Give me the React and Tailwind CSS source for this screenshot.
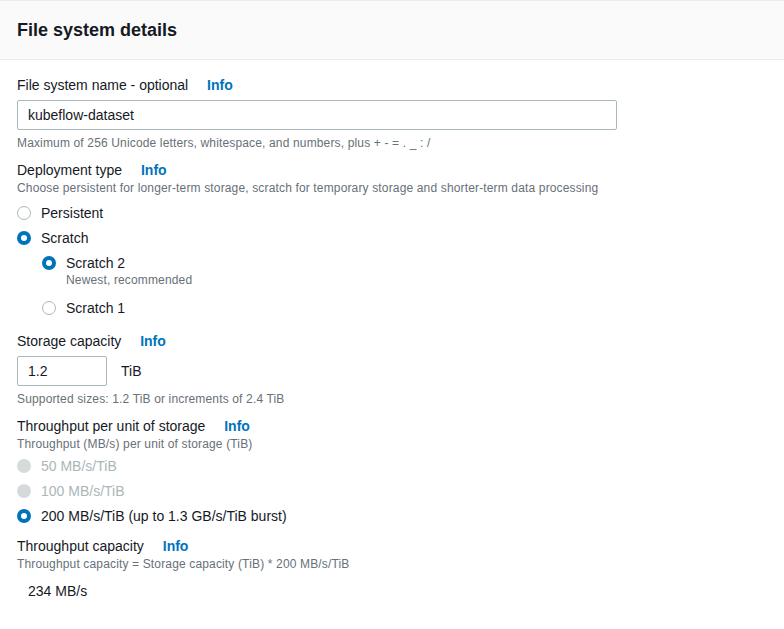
import React from "react";

const Info = () => (
  <span className="ml-[15px] font-bold text-[#0073bb]">Info</span>
);

const Radio = ({ state }) => {
  if (state === "checked")
    return (
      <span className="flex h-[14px] w-[14px] shrink-0 items-center justify-center rounded-full bg-[#0073bb]">
        <span className="h-[6px] w-[6px] rounded-full bg-white" />
      </span>
    );
  if (state === "disabled")
    return <span className="h-[14px] w-[14px] shrink-0 rounded-full bg-[#d5dbdb]" />;
  return (
    <span className="h-[14px] w-[14px] shrink-0 rounded-full border-[1.5px] border-[#aab7b8] bg-white" />
  );
};

const Option = ({ state, label, sub, className = "" }) => (
  <div className={className}>
    <div className="flex h-[20px] items-center gap-[10px]">
      <Radio state={state} />
      <span className={state === "disabled" ? "text-[#aab7b8]" : "text-[#16191f]"}>{label}</span>
    </div>
    {sub && (
      <div className="ml-[24px] text-[12px] leading-[14px] tracking-[0.15px] text-[#687078]">{sub}</div>
    )}
  </div>
);

export default function App() {
  return (
    <div
      className="min-h-screen bg-white text-[14px] text-[#16191f]"
      style={{ fontFamily: '"Liberation Sans", Arial, sans-serif' }}
    >
      {/* Header */}
      <div className="flex h-[60px] items-center border-y border-[#eaeded] bg-[#fafafa] px-[17px]">
        <h2 className="text-[18px] font-bold">File system details</h2>
      </div>

      <div className="px-[17px] pt-[15px] pb-8">
        {/* Name */}
        <div className="h-[20px] leading-[20px]">
          File system name - optional <Info />
        </div>
        <div className="mt-[5px] flex h-[30px] w-[600px] items-center rounded-[2px] border border-[#aab7b8] px-[10px]">
          kubeflow-dataset
        </div>
        <div className="mt-[5px] text-[12px] leading-[16px] tracking-[0.15px] text-[#687078]">
          Maximum of 256 Unicode letters, whitespace, and numbers, plus + - = . _ : /
        </div>

        {/* Deployment type */}
        <div className="mt-[9px] h-[20px] leading-[20px]">
          Deployment type <Info />
        </div>
        <div className="mt-[1px] text-[12px] leading-[14px] tracking-[0.15px] text-[#687078]">
          Choose persistent for longer-term storage, scratch for temporary storage and shorter-term data processing
        </div>
        <div className="mt-[8px] flex flex-col gap-[5px]">
          <Option state="unchecked" label="Persistent" />
          <Option state="checked" label="Scratch" />
          <div className="ml-[25px] flex flex-col gap-[11px]">
            <Option state="checked" label="Scratch 2" sub="Newest, recommended" />
            <Option state="unchecked" label="Scratch 1" />
          </div>
        </div>

        {/* Storage capacity */}
        <div className="mt-[13px] h-[20px] leading-[20px]">
          Storage capacity <Info />
        </div>
        <div className="mt-[5px] flex items-center gap-[14px]">
          <div className="flex h-[30px] w-[90px] items-center rounded-[2px] border border-[#aab7b8] px-[10px]">
            1.2
          </div>
          <span>TiB</span>
        </div>
        <div className="mt-[5px] text-[12px] leading-[16px] tracking-[0.15px] text-[#687078]">
          Supported sizes: 1.2 TiB or increments of 2.4 TiB
        </div>

        {/* Throughput per unit */}
        <div className="mt-[9px] h-[20px] leading-[20px]">
          Throughput per unit of storage <Info />
        </div>
        <div className="mt-[1px] text-[12px] leading-[14px] tracking-[0.15px] text-[#687078]">
          Throughput (MB/s) per unit of storage (TiB)
        </div>
        <div className="mt-[5px] flex flex-col gap-[5px]">
          <Option state="disabled" label="50 MB/s/TiB" />
          <Option state="disabled" label="100 MB/s/TiB" />
          <Option state="checked" label="200 MB/s/TiB (up to 1.3 GB/s/TiB burst)" />
        </div>

        {/* Throughput capacity */}
        <div className="mt-[10px] h-[20px] leading-[20px]">
          Throughput capacity <Info />
        </div>
        <div className="mt-[1px] text-[12px] leading-[14px] tracking-[0.15px] text-[#687078]">
          Throughput capacity = Storage capacity (TiB) * 200 MB/s/TiB
        </div>
        <div className="mt-[10px] h-[20px] pl-[11px] leading-[20px]">234 MB/s</div>
      </div>
    </div>
  );
}
